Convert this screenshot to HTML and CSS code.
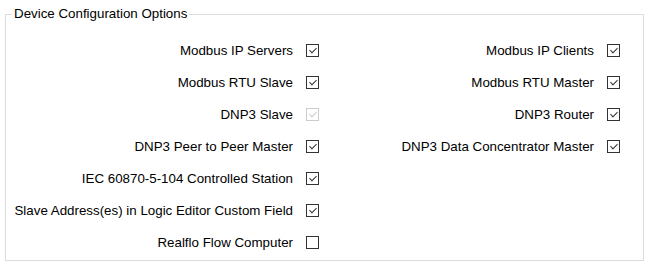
FILE: index.html
```html
<!DOCTYPE html>
<html>
  <head>
    <meta charset="utf-8" />
    <title>Device Configuration Options</title>
    <link rel="stylesheet" href="styles.css">
  </head>
  <body>
    <fieldset class="group">
      <legend>Device Configuration Options</legend>
      <div class="options">
        <label class="option">Modbus IP Servers <span class="box checked"></span></label>
        <label class="option">Modbus IP Clients <span class="box checked"></span></label>
        <label class="option">Modbus RTU Slave <span class="box checked"></span></label>
        <label class="option">Modbus RTU Master <span class="box checked"></span></label>
        <label class="option">DNP3 Slave <span class="box checked disabled"></span></label>
        <label class="option">DNP3 Router <span class="box checked"></span></label>
        <label class="option">DNP3 Peer to Peer Master <span class="box checked"></span></label>
        <label class="option">DNP3 Data Concentrator Master <span class="box checked"></span></label>
        <label class="option">IEC 60870-5-104 Controlled Station <span class="box checked"></span></label>
        <span></span>
        <label class="option">Slave Address(es) in Logic Editor Custom Field <span class="box checked"></span></label>
        <span></span>
        <label class="option">Realflo Flow Computer <span class="box"></span></label>
      </div>
    </fieldset>
  </body>
</html>
```

FILE: styles.css
```css
body {
  margin: 0;
  background: #ffffff;
  color: #000000;
  font-family: "Liberation Sans", Arial, sans-serif;
  font-size: 13.33px;
}
.group {
  width: 639px;
  height: 255px;
  margin: 6px 0 0 5px;
  padding: 0;
  border: 1px solid #dcdcdc;
  box-sizing: border-box;
}
.group legend {
  margin-left: 6px;
  padding: 0 2px;
  line-height: 16px;
}
.options {
  display: grid;
  grid-template-columns: 313px 301px;
  grid-auto-rows: 32px;
  padding-top: 12px;
}
.option {
  display: flex;
  justify-content: flex-end;
  align-items: center;
  gap: 13px;
}
.box {
  width: 13px;
  height: 13px;
  box-sizing: border-box;
  border: 1px solid #333333;
  background: #ffffff;
  position: relative;
}
.box.checked::after {
  content: "";
  position: absolute;
  left: 4px;
  top: 1px;
  width: 3px;
  height: 6px;
  border: solid #333333;
  border-width: 0 1px 1px 0;
  transform: rotate(45deg);
}
.box.disabled {
  border-color: #cccccc;
}
.box.disabled::after {
  border-color: #cccccc;
}
```
